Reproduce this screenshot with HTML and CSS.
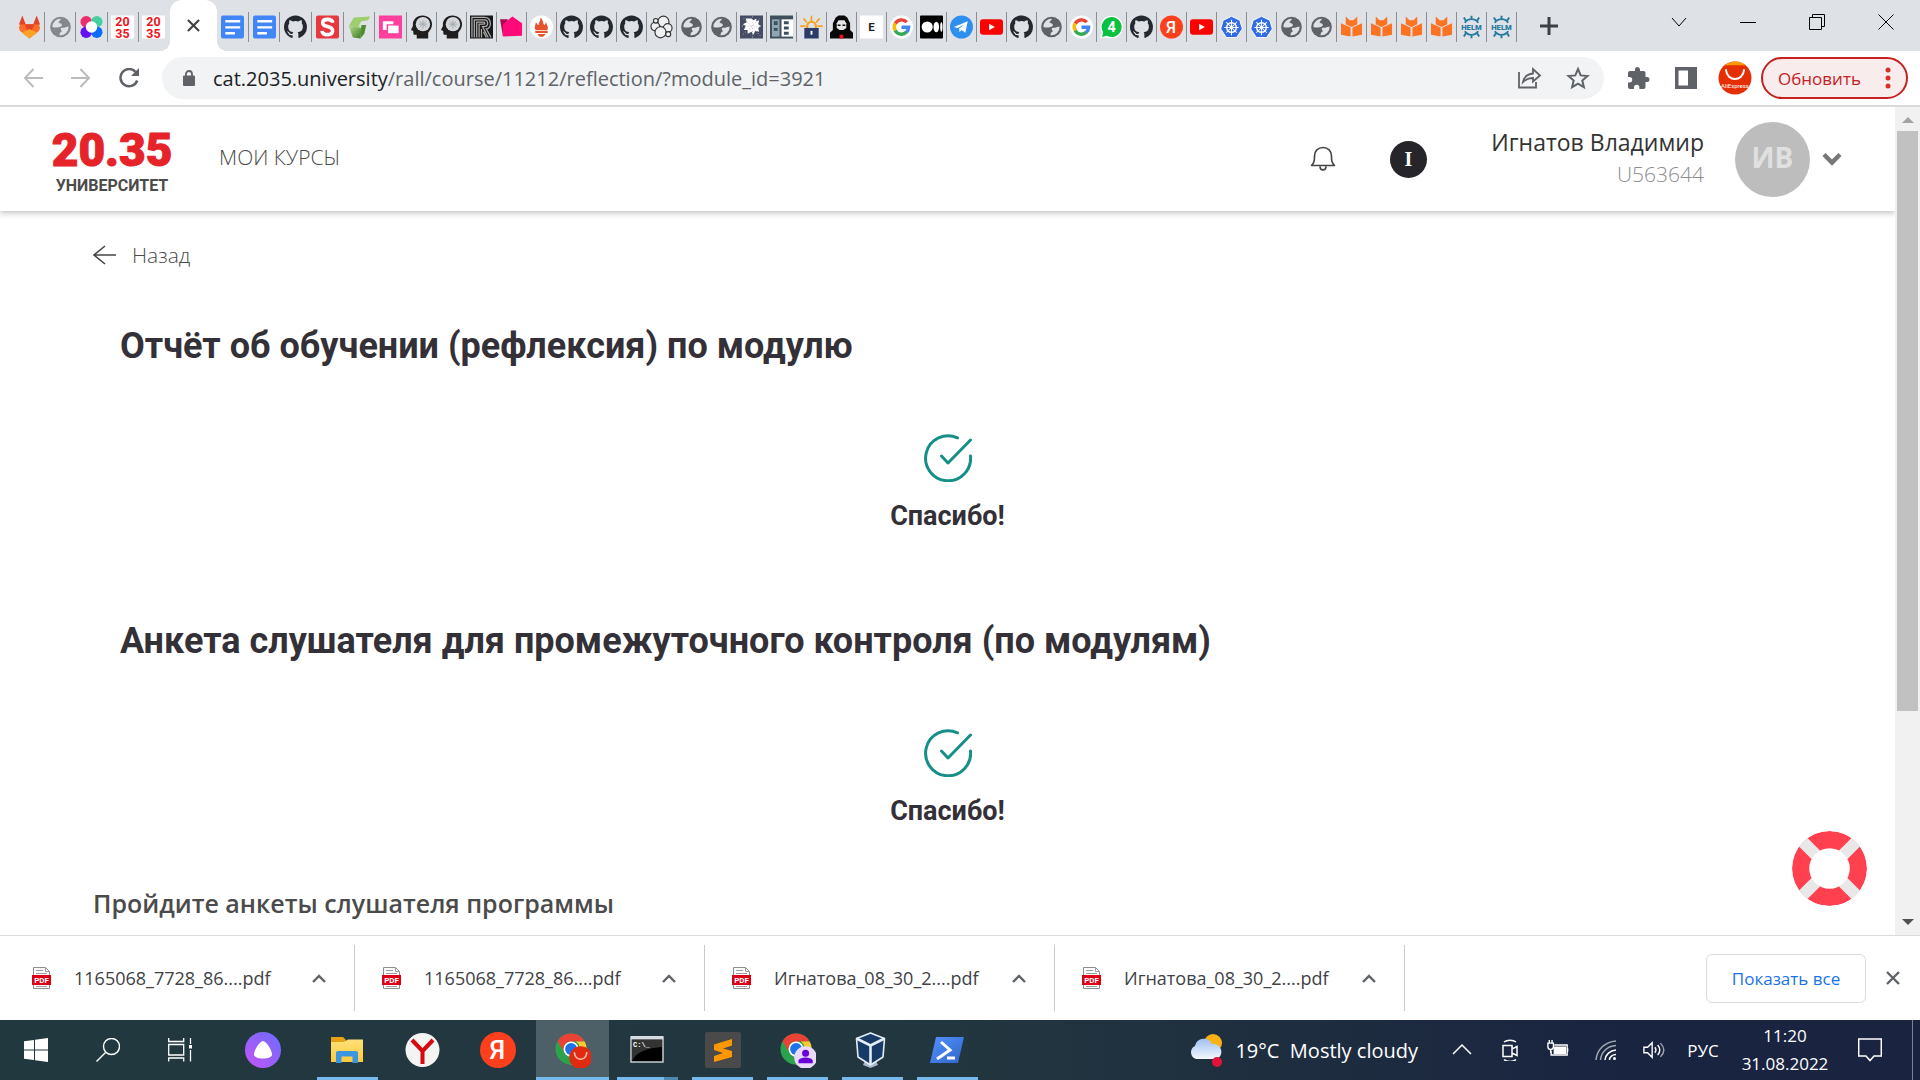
FILE: index.html
```html
<!DOCTYPE html>
<html lang="ru">
<head>
<meta charset="utf-8">
<meta name="viewport" content="width=device-width, initial-scale=1">
<title>Отчёт об обучении</title>
<link rel="stylesheet" href="styles.css">
</head>
<body>
<svg class="sprite" aria-hidden="true">
  <defs>
    <linearGradient id="g-alice" x1="0" y1="1" x2="1" y2="0"><stop offset="0" stop-color="#c455f5"/><stop offset="1" stop-color="#6a6cff"/></linearGradient>
    <linearGradient id="g-folder" x1="0" y1="0" x2="0" y2="1"><stop offset="0" stop-color="#ffe17a"/><stop offset="1" stop-color="#fdc93c"/></linearGradient>
    <linearGradient id="g-ps" x1="0" y1="0" x2="1" y2="1"><stop offset="0" stop-color="#5391fe"/><stop offset="1" stop-color="#2f66c8"/></linearGradient>
    <linearGradient id="g-cloud" x1="0" y1="0" x2="0" y2="1"><stop offset="0" stop-color="#9fc0f2"/><stop offset="1" stop-color="#f4f7fd"/></linearGradient>
    <linearGradient id="g-green" x1="0" y1="0" x2="1" y2="1"><stop offset="0" stop-color="#b5dc8c"/><stop offset="1" stop-color="#3c7a24"/></linearGradient>
    <clipPath id="c-ring"><circle cx="37.500" cy="37.500" r="37.500"/></clipPath>
  </defs>
  <symbol id="gitlab" viewBox="0 0 24 24"><path fill="#fc6d26" d="M1 13 4.500 1 8 9h8l3.500-8L23 13l-1 3-10 8L2 16z"/><path fill="#e24329" d="M4.500 0 1 9.500h7zM19.500 0 16 9.500h7zM7 9h10l-5 13z"/><path fill="#fca326" d="m4 18 8-4 8 4-8 6z"/></symbol>
  <symbol id="globe" viewBox="0 0 24 24"><circle cx="12" cy="12" r="10.800" fill="#5f6368"/><path fill="#dee1e6" d="M3.500 12A8.500 8.500 0 0 1 12.500 3.500c-.5 2-2.500 2-2.500 4 2.500.5 3.500 1 3.500 3-1.500 2-3 1.800-5 2-2 .2-3 0-5-.5zM20.500 11.500A8.500 8.500 0 0 1 11 20.500c0-2 .5-3 2-3.500 1-1.500-1.500-2-.5-4 2-.8 3 .2 4.500-.8z"/></symbol>
  <symbol id="dots" viewBox="0 0 24 24"><circle cx="6.500" cy="6.500" r="6" fill="#ee2d6f"/><circle cx="17.500" cy="6.500" r="6" fill="#45d0a0"/><circle cx="6.500" cy="17.500" r="6" fill="#6610f2"/><circle cx="17.500" cy="17.500" r="6" fill="#0a6cff"/><circle cx="12" cy="12" r="6" fill="#fff"/></symbol>
  <symbol id="docs" viewBox="0 0 24 24"><rect width="24" height="24" rx="2" fill="#4285f4"/><path stroke="#fff" stroke-width="2.400" d="M4.500 6h15.500M4.500 12.300h15.500M4.500 18.500h10"/></symbol>
  <symbol id="github" viewBox="0 0 16 16"><path fill="#24292f" d="M8 0C3.580 0 0 3.580 0 8c0 3.540 2.290 6.530 5.470 7.590.4.070.55-.17.55-.38 0-.19-.01-.82-.01-1.490-2.010.37-2.530-.49-2.690-.94-.09-.23-.48-.94-.82-1.130-.28-.15-.68-.52-.01-.53.63-.01 1.080.58 1.230.82.72 1.210 1.870.87 2.330.66.07-.52.28-.87.51-1.070-1.780-.2-3.640-.89-3.640-3.950 0-.87.31-1.590.82-2.150-.08-.2-.36-1.020.08-2.120 0 0 .67-.21 2.200.82a7.600 7.600 0 0 1 4 0c1.530-1.040 2.200-.82 2.200-.82.44 1.100.16 1.920.08 2.120.51.56.82 1.270.82 2.150 0 3.070-1.870 3.750-3.650 3.950.29.25.54.73.54 1.480 0 1.070-.01 1.930-.01 2.200 0 .21.15.46.55.38A8 8 0 0 0 16 8c0-4.420-3.580-8-8-8z"/></symbol>
  <symbol id="sred" viewBox="0 0 24 24"><rect width="24" height="24" rx="2" fill="#e5383f"/><path fill="none" stroke="#fff" stroke-width="3.800" d="M17.500 7.500C17 4.500 14.500 4 12 4c-3 0-5 1.300-5 3.800C7 13 17.300 10 17.300 16c0 2.600-2.300 4-5.300 4s-5.500-1.300-5.700-4"/></symbol>
  <symbol id="cube" viewBox="0 0 24 24"><path fill="url(#g-green)" d="M1 11 14 13 13 24 5 23z"/><path fill="#9fce6c" d="M1 11 6 2l17-1-2 4-7 1-3 5 3 2z"/><path fill="#4d8c30" d="M14 10h5l-2 9-4 5z"/></symbol>
  <symbol id="pinkwin" viewBox="0 0 24 24"><path fill="#ff3f9b" d="M0 0h24v24H0z"/><path fill="#fff" d="M4 6h11v3H8v6H4z"/><path fill="#fff" d="M9.500 10.500h11v8h-11z"/></symbol>
  <symbol id="head" viewBox="0 0 24 24"><path fill="#1f1d1d" d="M3 8C4 3 8 0 13 0c6 0 10 4 10 9 0 4-2 6-4 9v6H7v-4H4c-1-1 0-3-1-4l-2-1 2-4z"/><circle cx="13.500" cy="9" r="7.500" fill="#d5d9dc"/><path fill="none" stroke="#a4a9af" d="M9 9h9M13.500 5v9M10 6l7 6M10 12l7-6"/></symbol>
  <symbol id="rmaze" viewBox="0 0 24 24"><path fill="#18181a" d="M0 0h24v24H0z"/><path fill="none" stroke="#aaa" stroke-width="1.300" d="M2 23V2h13c8 0 8 12 2 12l5 9M4.500 23V4.500H15c4.500 0 4.500 7 0 7h-2l6 11.500M7 23V7h7c2 0 2 2 0 2H9.500v14M12 14v9M14 17l3 6"/></symbol>
  <symbol id="pinkfolder" viewBox="0 0 24 24"><path fill="#a80a52" d="M0 4h8v17H3z"/><path fill="#ff0a78" d="M3 22V9l10-8 10 7v13z"/></symbol>
  <symbol id="prom" viewBox="0 0 24 24"><circle cx="12" cy="12" r="12" fill="#fff"/><path fill="#e6522c" d="M6 15c-2-3 0-5 0-8 2 2 2 3 3 3 0-3 2-4 2-8 3 3 2 5 4 8 1-1 1-2 2-3 0 3 3 5 1 8zM5.500 16h13v2.300h-13zM8 19.300h8c-1 4-7 4-8 0z"/></symbol>
  <symbol id="elastic" viewBox="0 0 24 24"><g fill="#eef0f2" stroke="#333" stroke-width="1.200"><circle cx="14" cy="6.500" r="5.800"/><circle cx="5.500" cy="11.500" r="4.500"/><circle cx="18.500" cy="13" r="4.500"/><circle cx="11" cy="17.500" r="5.800"/><circle cx="19" cy="19.500" r="2.600"/><circle cx="6" cy="5.500" r="2.400"/></g></symbol>
  <symbol id="splash" viewBox="0 0 24 24"><path fill="#454c63" d="M0 0h24v24H0z"/><path fill="#fff" d="m12 3 2 2 3-2 0 3 3-1-1 4 3 2-3 2 1 4-4-1-2 4-2-3-4 2 0-4-4 0 2-4-3-2 4-2-1-4 4 0z"/><path stroke="#b9becb" stroke-dasharray="1 2" d="M13 1v22M2 11h21M4 3l17 18M3 20 21 3"/></symbol>
  <symbol id="panel" viewBox="0 0 24 24"><path fill="#3d505b" d="M0 0h24v24H0z"/><path fill="#90a5b1" d="M2 4h8v18H2z"/><path fill="#fff" d="M12 4h12v18H12z"/><path fill="#3d505b" d="M4 6h4v4H4zM4 13h4v3H4zM14.500 6h5v3h-5zM14.500 11.500h5v3h-5zM14.500 17h5v3h-5z"/></symbol>
  <symbol id="lencrypt" viewBox="0 0 24 24"><path stroke="#f9a11b" stroke-width="1.800" stroke-linecap="round" d="M12 1v4M4 3.500l2.500 3M20 3.500l-2.500 3M1 11h4M19 11h4"/><path fill="none" stroke="#f9a11b" stroke-width="2.200" d="M7.500 13v-2a4.500 4.500 0 0 1 9 0v2"/><path fill="#2c3c69" d="M4.500 13h15v11h-15z"/><path stroke="#fff" stroke-width="2" d="M12 16v4"/></symbol>
  <symbol id="hood" viewBox="0 0 24 24"><path fill="#080808" d="M6 2 9 0h6l3 2 3 6v7l3 3v6H0v-6l3-3V8z"/><path fill="#e6e6e6" d="M7 8 9 5h6l2 3v5l-3 2h-4l-3-2z"/><path fill="#111" d="M8 9.500h3V11H8zM13 9.500h3V11h-3z"/><path fill="#e11" d="M10 20h4v4h-4z"/></symbol>
  <symbol id="google" viewBox="0 0 24 24"><circle cx="12" cy="12" r="12" fill="#fff"/><g fill="none" stroke-width="3.600"><path stroke="#ea4335" d="M5.500 8.500A7.400 7.400 0 0 1 17.500 7"/><path stroke="#fbbc05" d="M5.500 8.300a7.400 7.400 0 0 0 0 7.600"/><path stroke="#34a853" d="M5.400 15.600a7.400 7.400 0 0 0 11.800 1.700"/><path stroke="#4285f4" d="M12 12.300h7.400c0 2.500-1 4-2.300 5.200"/></g></symbol>
  <symbol id="medium" viewBox="0 0 24 24"><rect width="24" height="24" rx="1"/><circle cx="7.500" cy="12" r="5.800" fill="#fff"/><ellipse cx="17" cy="12" rx="2.900" ry="5.500" fill="#fff"/><ellipse cx="22.300" cy="12" rx="1.200" ry="5" fill="#fff"/></symbol>
  <symbol id="telegram" viewBox="0 0 24 24"><circle cx="12" cy="12" r="12" fill="#2f8fee"/><path fill="#fff" d="M4 12 18.500 6 16 18l-4-3-2 2.500-.5-4 6-4.500-7.500 4z"/></symbol>
  <symbol id="youtube" viewBox="0 0 24 24"><rect y="4" width="24" height="16" rx="3" fill="#f00"/><path fill="#fff" d="m9.500 8.500 6 3.500-6 3.500z"/></symbol>
  <symbol id="wa" viewBox="0 0 24 24"><path fill="#fff" d="M12 0a12 12 0 1 1-5 23l-7 1 2-6A12 12 0 0 1 12 0z"/><path fill="#0bc142" d="M12 1.500a10.500 10.500 0 1 1-5 19.700l-5 1.300 1.300-5A10.500 10.500 0 0 1 12 1.500z"/></symbol>
  <symbol id="k8s" viewBox="0 0 24 24"><path fill="#326ce5" stroke="#fff" d="m12 .8 8.700 4.200L23.300 14l-6 9H6.700L.7 14 3.300 5z"/><circle cx="12" cy="12.500" r="5" fill="none" stroke="#fff" stroke-width="1.500"/><path stroke="#fff" stroke-width="1.100" d="M12 4.500v16M4.500 12.500h15M6.500 7l11 11M17.500 7l-11 11"/></symbol>
  <symbol id="bookcat" viewBox="0 0 24 24"><path fill="#fd7321" d="m6 1 4 4h4l4-4v8l-6 3-6-3zM1 8l10 4.500V22L1 20zM23 8l-10 4.500V22l10-2z"/></symbol>
  <symbol id="helm" viewBox="0 0 24 24"><g fill="none" stroke="#277a9f" stroke-width="2"><path d="M5 7.500a8.500 8.500 0 0 1 14 0M5 16.500a8.500 8.500 0 0 0 14 0M12 0v4M12 20v4M4 2l2.500 4M20 2l-2.500 4M4 22l2.500-4M20 22l-2.500-4"/></g></symbol>
  <symbol id="pdf" viewBox="0 0 19 22"><path fill="#fff" stroke="#8b8f92" d="M1.500.5h12l4 4v17h-16z"/><path fill="none" stroke="#9a9ea0" d="M13.500.5v4h4M4 3.500h7M4 6.500h11M4 19.500h11"/><path fill="#dc0016" d="M0 8h19v10H0z"/></symbol>
  <symbol id="up" viewBox="0 0 14 9"><path fill="none" stroke="#5f6368" stroke-width="2.400" d="m1 8 6-6 6 6"/></symbol>
  <symbol id="done" viewBox="0 0 48 48"><g fill="none" stroke="#158f87" stroke-width="3" stroke-linecap="round" stroke-linejoin="round"><path d="M33.500 3.800A22.500 22.500 0 1 0 46.500 22"/><path d="m17.500 22 6.500 7L46.500 6"/></g></symbol>
  <symbol id="chrome" viewBox="0 0 36 36"><circle cx="17" cy="18" r="16.500" fill="#2ba24c"/><path fill="#ea4335" d="M2.700 9.800A16.500 16.500 0 0 1 31.300 10H17a8 8 0 0 0-7.500 11z"/><path fill="#fcc934" d="M31.300 10A16.500 16.500 0 0 1 17 34.500L24 22a8 8 0 0 0-2-12z"/><circle cx="17" cy="18" r="8" fill="#fff"/><circle cx="17" cy="18" r="6.300" fill="#1a73e8"/></symbol>
</svg>

<header class="browser">
  <nav class="tabs" aria-label="Вкладки">
    <div class="tab-group tab-group-first">
      <button class="tab"><svg><use href="#gitlab"/></svg></button>
      <button class="tab"><svg class="faded"><use href="#globe"/></svg></button>
      <button class="tab"><svg><use href="#dots"/></svg></button>
      <button class="tab"><svg class="u2035" viewBox="0 0 24 24"><path fill="#fff" d="M0 0h24v24H0z"/><text x="12" y="11">20</text><text x="12" y="23">35</text></svg></button>
      <button class="tab tab-last"><svg class="u2035" viewBox="0 0 24 24"><path fill="#fff" d="M0 0h24v24H0z"/><text x="12" y="11">20</text><text x="12" y="23">35</text></svg></button>
    </div>
    <button class="tab-active" aria-label="Закрыть вкладку"><svg viewBox="0 0 14 14"><path stroke="#3c4043" stroke-width="2.200" d="m1 1 12 12M13 1 1 13"/></svg></button>
    <div class="tab-group tab-group-second">
      <button class="tab"><svg><use href="#docs"/></svg></button>
      <button class="tab"><svg><use href="#docs"/></svg></button>
      <button class="tab"><svg><use href="#github"/></svg></button>
      <button class="tab"><svg><use href="#sred"/></svg></button>
      <button class="tab"><svg><use href="#cube"/></svg></button>
      <button class="tab"><svg><use href="#pinkwin"/></svg></button>
    </div>
    <div class="tab-group tab-group-rest">
      <button class="tab"><svg><use href="#head"/></svg></button>
      <button class="tab"><svg><use href="#head"/></svg></button>
      <button class="tab"><svg><use href="#rmaze"/></svg></button>
      <button class="tab"><svg><use href="#pinkfolder"/></svg></button>
      <button class="tab"><svg><use href="#prom"/></svg></button>
      <button class="tab"><svg><use href="#github"/></svg></button>
      <button class="tab"><svg><use href="#github"/></svg></button>
      <button class="tab"><svg><use href="#github"/></svg></button>
      <button class="tab"><svg><use href="#elastic"/></svg></button>
      <button class="tab"><svg><use href="#globe"/></svg></button>
      <button class="tab"><svg><use href="#globe"/></svg></button>
      <button class="tab"><svg><use href="#splash"/></svg></button>
      <button class="tab"><svg><use href="#panel"/></svg></button>
      <button class="tab"><svg><use href="#lencrypt"/></svg></button>
      <button class="tab"><svg><use href="#hood"/></svg></button>
      <button class="tab"><svg class="letter-e" viewBox="0 0 24 24"><path fill="#fff" d="M0 0h24v24H0z"/><text x="12" y="16">E</text></svg></button>
      <button class="tab"><svg><use href="#google"/></svg></button>
      <button class="tab"><svg><use href="#medium"/></svg></button>
      <button class="tab"><svg><use href="#telegram"/></svg></button>
      <button class="tab"><svg><use href="#youtube"/></svg></button>
      <button class="tab"><svg><use href="#github"/></svg></button>
      <button class="tab"><svg><use href="#globe"/></svg></button>
      <button class="tab"><svg><use href="#google"/></svg></button>
      <button class="tab"><svg class="wa" viewBox="0 0 24 24"><use href="#wa"/><text x="12" y="17">4</text></svg></button>
      <button class="tab"><svg><use href="#github"/></svg></button>
      <button class="tab"><svg class="yandex" viewBox="0 0 24 24"><circle cx="12" cy="12" r="12" fill="#fc3f1d"/><text x="11.500" y="18">Я</text></svg></button>
      <button class="tab"><svg><use href="#youtube"/></svg></button>
      <button class="tab"><svg><use href="#k8s"/></svg></button>
      <button class="tab"><svg><use href="#k8s"/></svg></button>
      <button class="tab"><svg><use href="#globe"/></svg></button>
      <button class="tab"><svg><use href="#globe"/></svg></button>
      <button class="tab"><svg><use href="#bookcat"/></svg></button>
      <button class="tab"><svg><use href="#bookcat"/></svg></button>
      <button class="tab"><svg><use href="#bookcat"/></svg></button>
      <button class="tab"><svg><use href="#bookcat"/></svg></button>
      <button class="tab"><svg class="helm" viewBox="0 0 24 24"><use href="#helm"/><text x="12" y="15">HELM</text></svg></button>
      <button class="tab"><svg class="helm" viewBox="0 0 24 24"><use href="#helm"/><text x="12" y="15">HELM</text></svg></button>
    </div>
    <button class="new-tab" aria-label="Новая вкладка"><svg viewBox="0 0 18 18"><path stroke="#3c4043" stroke-width="3" d="M9 0v18M0 9h18"/></svg></button>
    <div class="window-controls">
      <button aria-label="Поиск вкладок"><svg viewBox="0 0 16 16"><path d="m1 4 7 8 7-8"/></svg></button>
      <button aria-label="Свернуть"><svg viewBox="0 0 16 16"><path d="M0 8.500h16"/></svg></button>
      <button aria-label="Развернуть"><svg viewBox="0 0 16 16"><path d="M.5 3.500h12v12H.5zM3.500 3.500v-3h12v12h-3"/></svg></button>
      <button aria-label="Закрыть"><svg viewBox="0 0 16 16"><path d="m.5.5 15 15M15.500.5l-15 15"/></svg></button>
    </div>
  </nav>
  <div class="toolbar">
    <button class="tool" aria-label="Назад"><svg viewBox="0 0 20 20"><path class="dim" d="M20 10H2M10.500 1 2 10l8.500 9"/></svg></button>
    <button class="tool" aria-label="Вперёд"><svg viewBox="0 0 20 20"><path class="dim" d="M0 10h18M9.500 1l8.500 9-8.500 9"/></svg></button>
    <button class="tool" aria-label="Обновить страницу"><svg viewBox="0 0 20 20"><path fill="none" stroke="#5f6368" stroke-width="2.500" d="M18.200 12.500a8.600 8.600 0 1 1-1.700-8.600"/><path fill="#5f6368" d="M20 0v8h-8z"/></svg></button>
    <div class="omnibox">
      <svg class="lock" viewBox="0 0 12 16"><path fill="#5f6368" d="M1 5.500h10a1 1 0 0 1 1 1V15a1 1 0 0 1-1 1H1a1 1 0 0 1-1-1V6.500a1 1 0 0 1 1-1z"/><path fill="none" stroke="#5f6368" stroke-width="1.800" d="M3 6V4a3 3 0 0 1 6 0v2"/></svg>
      <a class="url" href="#"><span>cat.2035.university</span>/rall/course/11212/reflection/?module_id=3921</a>
      <button aria-label="Поделиться"><svg viewBox="0 0 24 22"><g fill="none" stroke="#5f6368" stroke-width="1.800"><path d="M1 5v15.500h17V15"/><path d="M5 15c1-5 4-8 10-8.500V2l7 6.500-7 6V11c-4 0-7 1-10 4z"/></g></svg></button>
      <button aria-label="В закладки"><svg viewBox="0 0 24 24"><path fill="none" stroke="#5f6368" stroke-width="2" d="m12 3 2.700 6.400 6.800.6-5.200 4.500 1.600 6.700L12 17.600l-5.900 3.600 1.600-6.700L2.500 10l6.800-.6z"/></svg></button>
    </div>
    <div class="extensions">
      <button aria-label="Расширения"><svg viewBox="0 0 24 24"><path fill="#5f6368" d="M21 11h-1.500V7a2 2 0 0 0-2-2H14V3.500a2.500 2.500 0 0 0-5 0V5H4a2 2 0 0 0-2 2v4h1.500a2.700 2.700 0 0 1 0 5.400H2V21a2 2 0 0 0 2 2h4v-1.500a2.700 2.700 0 0 1 5.400 0V23h4.100a2 2 0 0 0 2-2v-5H21a2.500 2.500 0 0 0 0-5z"/></svg></button>
      <button aria-label="Боковая панель"><svg viewBox="0 0 24 24"><path fill="#5f6368" d="M1 1h22v22H1z"/><path fill="#fff" d="M4.500 4.500H14v15H4.500z"/></svg></button>
      <button class="profile" aria-label="Профиль"><svg viewBox="0 0 34 34"><circle cx="17" cy="17" r="16.500" fill="#e62e04"/><path fill="#f90" d="M6.500 4.200a16.500 16.500 0 0 1 21 0z"/><path fill="none" stroke="#fff" stroke-width="2" stroke-linecap="round" d="M8 9c1 12 17 12 18 0"/><text x="17" y="27">AliExpress</text></svg></button>
    </div>
    <button class="update">Обновить<svg viewBox="0 0 6 22"><g fill="#d93025"><circle cx="3" cy="3" r="2.500"/><circle cx="3" cy="11" r="2.500"/><circle cx="3" cy="19" r="2.500"/></g></svg></button>
  </div>
</header>

<div class="viewport">
  <div class="page">
    <header class="site-header">
      <a class="logo" href="#"><span class="logo-mark">20.35</span><span class="logo-name">УНИВЕРСИТЕТ</span></a>
      <a class="nav-link" href="#">МОИ КУРСЫ</a>
      <button class="bell" aria-label="Уведомления"><svg viewBox="0 0 26 26"><path fill="none" stroke="#444" stroke-width="1.600" stroke-linejoin="round" d="M1.500 19.500c3-3 3-5 3-9.500 0-5 3.500-8.500 8.500-8.500s8.500 3.500 8.500 8.500c0 4.500 0 6.500 3 9.500zM10 20.500c0 4.500 6 4.500 6 0"/></svg></button>
      <button class="info">I</button>
      <div class="user"><strong>Игнатов Владимир</strong><span>U563644</span></div>
      <button class="account"><span class="avatar">ИВ</span><svg viewBox="0 0 20 14"><path fill="none" stroke="#777" stroke-width="4.500" d="m2 2.500 8 8 8-8"/></svg></button>
    </header>
    <main class="content">
      <a class="back" href="#"><svg viewBox="0 0 23 20"><path fill="none" stroke="#444" stroke-width="1.600" d="M23 10H1M12 1 1 10l11 9"/></svg>Назад</a>
      <section class="report">
        <h1>Отчёт об обучении (рефлексия) по модулю</h1>
        <div class="thanks"><svg><use href="#done"/></svg><p>Спасибо!</p></div>
      </section>
      <section class="report">
        <h1>Анкета слушателя для промежуточного контроля (по модулям)</h1>
        <div class="thanks"><svg><use href="#done"/></svg><p>Спасибо!</p></div>
      </section>
      <h2>Пройдите анкеты слушателя программы</h2>
    </main>
    <button class="support" aria-label="Помощь"><svg viewBox="0 0 75 75"><g clip-path="url(#c-ring)"><circle cx="37.500" cy="37.500" r="37.500" fill="#ff404f"/><path stroke="#e8e8e8" stroke-width="12" d="m0 0 75 75M75 0 0 75"/></g><circle cx="37.500" cy="37.500" r="20.300" fill="#fff"/></svg></button>
  </div>
  <div class="scrollbar" aria-hidden="true">
    <svg viewBox="0 0 12 6"><path fill="#a3a3a3" d="M6 0l6 6H0z"/></svg>
    <div class="track"><div class="thumb"></div></div>
    <svg viewBox="0 0 12 6"><path fill="#505050" d="M0 0h12L6 6z"/></svg>
  </div>
</div>

<section class="downloads" aria-label="Загрузки">
  <div class="download"><svg class="pdf" viewBox="0 0 19 22"><use href="#pdf"/><text x="9.500" y="16">PDF</text></svg><a href="#">1165068_7728_86....pdf</a><button aria-label="Меню"><svg><use href="#up"/></svg></button></div>
  <div class="download"><svg class="pdf" viewBox="0 0 19 22"><use href="#pdf"/><text x="9.500" y="16">PDF</text></svg><a href="#">1165068_7728_86....pdf</a><button aria-label="Меню"><svg><use href="#up"/></svg></button></div>
  <div class="download"><svg class="pdf" viewBox="0 0 19 22"><use href="#pdf"/><text x="9.500" y="16">PDF</text></svg><a href="#">Игнатова_08_30_2....pdf</a><button aria-label="Меню"><svg><use href="#up"/></svg></button></div>
  <div class="download"><svg class="pdf" viewBox="0 0 19 22"><use href="#pdf"/><text x="9.500" y="16">PDF</text></svg><a href="#">Игнатова_08_30_2....pdf</a><button aria-label="Меню"><svg><use href="#up"/></svg></button></div>
  <button class="show-all">Показать все</button>
  <button class="close-bar" aria-label="Закрыть"><svg viewBox="0 0 14 14"><path stroke="#5f6368" stroke-width="2.400" d="m1 1 12 12M13 1 1 13"/></svg></button>
</section>

<footer class="taskbar">
  <button class="sys" aria-label="Пуск"><svg viewBox="0 0 24 24"><path fill="#fff" d="M0 3.300 10 2v9.400H0zM11 1.800 24 0v11.400H11zM0 12.500h10V22L0 20.700zM11 12.500h13V24l-13-1.800z"/></svg></button>
  <button class="sys" aria-label="Поиск"><svg viewBox="0 0 24 24"><circle cx="15.500" cy="8.500" r="8" fill="none" stroke="#fff" stroke-width="1.400"/><path stroke="#fff" stroke-width="1.400" d="M9.500 14.500.5 23.500"/></svg></button>
  <button class="sys" aria-label="Представление задач"><svg viewBox="0 0 24 24"><path fill="none" stroke="#fff" stroke-width="1.300" d="M.7 0v3.500h15V0M.7 6.500h15V17h-15zM.7 23.500V20h15v3.500M22.500 0v6M22.500 12v11.500"/><path fill="#fff" d="M21 7h3v3.500h-3z"/></svg></button>
  <button class="app app-alice" aria-label="Алиса"><svg viewBox="0 0 36 36"><circle cx="18" cy="18" r="18" fill="url(#g-alice)"/><path fill="#fff" d="M18 9c3 0 9 9 9 13.500 0 2.500-4 4-9 4s-9-1.500-9-4C9 18 15 9 18 9z"/></svg></button>
  <button class="app running" aria-label="Проводник"><svg viewBox="0 0 36 36"><path fill="#e6a117" d="M1 5h12l3 3v6H1z"/><path fill="url(#g-folder)" d="M1 10h13l4-2.500h15V30H1z"/><path fill="#3a97df" d="M6 31V20l2-1h18l2 1v11h-5.500v-6.500h-11V31z"/></svg></button>
  <button class="app" aria-label="Яндекс Браузер"><svg viewBox="0 0 36 36"><circle cx="17.500" cy="18" r="17" fill="#f4f4f4"/><path fill="none" stroke="#d6090e" stroke-width="4" d="m7 8 10.500 11M28 8 17.500 19v13"/></svg></button>
  <button class="app" aria-label="Яндекс"><svg class="yandex" viewBox="0 0 24 24"><circle cx="12" cy="12" r="12" fill="#fc3f1d"/><text x="11.500" y="18">Я</text></svg></button>
  <button class="app current" aria-label="Chrome"><svg viewBox="0 0 38 38"><use href="#chrome" width="36" height="36"/><circle cx="27" cy="27" r="12" fill="#e02b10"/><path fill="none" stroke="#ffb7a4" stroke-width="1.800" stroke-linecap="round" d="M20.500 22c1 9 12 9 13 0"/></svg></button>
  <button class="app running stacked" aria-label="Командная строка"><svg class="console" viewBox="0 0 36 36"><path fill="#000" stroke="#c8ccd0" stroke-width="1.500" d="M1 5h32v25H1z"/><path fill="#d4dbe2" d="M1 4h32v3.500H1z"/><path fill="#333" d="M2 8h30v7C18 16 7 19 2 29z"/><text x="3" y="15">C:\_</text></svg></button>
  <button class="app running" aria-label="Sublime Text"><svg viewBox="0 0 36 36"><rect width="36" height="36" rx="2" fill="#4a4a4a"/><path fill="#ff9800" d="M9 12.500 27 7v6.500l-9 3 9 2.500v6L9 30v-6l9-3-9-3z"/></svg></button>
  <button class="app running" aria-label="Chrome, второй профиль"><svg viewBox="0 0 38 38"><use href="#chrome" width="36" height="36"/><circle cx="27" cy="27" r="12" fill="#ead9fb"/><circle cx="27" cy="22.500" r="3.700" fill="#6a00d8"/><path fill="#6a00d8" d="M19.500 33v-3c2-4 13-4 15 0v3z"/></svg></button>
  <button class="app running" aria-label="VirtualBox"><svg viewBox="0 0 36 36"><path fill="#a9b8c8" d="M10 29h11l2 4-7.500 3L8 33z"/><path fill="#183a66" stroke="#e3edf6" stroke-width="1.600" stroke-linejoin="round" d="m15.500 1 14 5.500L28 25l-12.500 8L3 25 1.500 6.500z"/><path fill="none" stroke="#e3edf6" stroke-width="2.600" d="m1.500 6.500 14 7 14-7M15.500 13.500V33"/></svg></button>
  <button class="app running" aria-label="PowerShell"><svg viewBox="0 0 36 36"><path fill="url(#g-ps)" d="M6 5h28l-6 26H0z"/><path fill="none" stroke="#fff" stroke-width="3" d="m11 10 9 8-13 9M17 26h8"/></svg></button>
  <div class="tray">
    <button class="weather"><svg viewBox="0 0 34 34"><circle cx="24" cy="10" r="9" fill="#fbb016"/><path fill="url(#g-cloud)" d="M7 26a7 7 0 0 1-1-13 9 9 0 0 1 17-2 8 8 0 0 1 5 15z"/><circle cx="28" cy="29" r="5" fill="#e3123a"/></svg>19°C&nbsp; Mostly cloudy</button>
    <button class="tray-icon" aria-label="Скрытые значки"><svg viewBox="0 0 22 22"><path d="m2 15 9-9 9 9"/></svg></button>
    <button class="tray-icon" aria-label="Камера"><svg viewBox="0 0 22 22"><path d="M4 6.500h9v11H4zM13 10l5-2.500v9L13 14M5 3c3-2.500 9-2.500 12 0M5 20.500c3 2.500 9 2.500 12 0"/></svg></button>
    <button class="tray-icon" aria-label="Батарея"><svg viewBox="0 0 24 22"><path d="M8 5.500h14v11H4.500V12M22.500 9v4M1 3.500h6v4c0 4-6 4-6 0zM2.500 0v3M5.500 0v3M4 10v4"/><path class="solid" d="M8 8h12v6.500H8z"/></svg></button>
    <button class="tray-icon" aria-label="Сеть"><svg viewBox="0 0 22 22"><path class="faint" d="M1 21C2 10 10 3 21 2M5.500 21c.5-8 7-14 15.500-14.500"/><path d="M10 21c.5-5.500 5-9.500 11-10M14.500 21c0-3 3-5.500 6.500-5.500"/><circle class="solid" cx="19.500" cy="19.500" r="1.500"/></svg></button>
    <button class="tray-icon" aria-label="Громкость"><svg viewBox="0 0 24 22"><path d="M1 8h4l5-5v16l-5-5H1zM13 8c1.500 2 1.500 4 0 6M16 5.500c3 3.500 3 7.500 0 11"/><path class="faint" d="M19 3.500c5 5 5 10 0 15"/></svg></button>
    <button class="language">РУС</button>
    <button class="clock"><span>11:20</span><span>31.08.2022</span></button>
    <button class="notice" aria-label="Центр уведомлений"><svg viewBox="0 0 24 24"><path d="M.7 1h22.600v17H16l-4 4.500L8 18H.7z"/></svg></button>
    <button class="desktop" aria-label="Показать рабочий стол"></button>
  </div>
</footer>
</body>
</html>
```
FILE: styles.css
```css
* {
  box-sizing: border-box;
}

body {
  margin: 0;
  height: 100vh;
  display: flex;
  flex-direction: column;
  overflow: hidden;
  background: #fff;
  color: #343038;
  font-family: "Open Sans", "Noto Sans", sans-serif;
}

button {
  padding: 0;
  border: 0;
  background: none;
  color: inherit;
  font: inherit;
  display: flex;
  align-items: center;
  justify-content: center;
}

a {
  color: inherit;
  text-decoration: none;
}

svg {
  flex: none;
}

.sprite {
  position: absolute;
  width: 0;
  height: 0;
}

/* Lettering inside icons */
.u2035 text,
.letter-e text,
.wa text,
.yandex text,
.helm text,
.pdf text,
.profile text {
  font-family: Roboto, sans-serif;
  font-weight: 700;
  text-anchor: middle;
  fill: #fff;
}

.tab .u2035 text {
  font-size: 13px;
  fill: #ed1420;
}

.tab .letter-e text {
  font-size: 12px;
  fill: #222;
}

.wa text {
  font-size: 15px;
}

.yandex text {
  font-size: 17px;
  font-weight: 500;
}

.tab .helm text {
  font-size: 8px;
  font-weight: 900;
  fill: #277a9f;
}

.pdf text {
  font-size: 8px;
}

.profile text {
  font-size: 6px;
  font-weight: 400;
}

.console text {
  font: 700 7px "Liberation Mono", monospace;
  fill: #fff;
}

/* Tab strip */
.tabs {
  display: flex;
  height: 51px;
  padding-left: 14px;
  background: #dee1e6;
}

.tab-group {
  display: flex;
  align-items: center;
  padding-top: 2px;
}

.tab-group-first {
  width: 156px;
}

.tab-group-second {
  width: 190px;
}

.tab-group-rest {
  width: 1110px;
}

.tab {
  flex: 1;
  height: 30px;
  border-right: 1px solid #8a8d91;
}

.tab-last {
  border-color: transparent;
}

.tab svg {
  width: 23px;
  height: 24px;
}

.tab .faded {
  opacity: 0.7;
}

.tab-active {
  position: relative;
  width: 47px;
  border-radius: 12px 12px 0 0;
  background: #fff;
}

.tab-active::before,
.tab-active::after {
  content: "";
  position: absolute;
  bottom: 0;
  width: 10px;
  height: 10px;
}

.tab-active::before {
  right: 100%;
  background: radial-gradient(circle at 0 0, transparent 10px, #fff 10px);
}

.tab-active::after {
  left: 100%;
  background: radial-gradient(circle at 100% 0, transparent 10px, #fff 10px);
}

.tab-active svg {
  width: 13px;
  height: 13px;
}

.new-tab {
  width: 64px;
}

.new-tab svg {
  width: 18px;
  height: 18px;
}

.window-controls {
  display: flex;
  height: 44px;
  margin-left: auto;
}

.window-controls button {
  width: 69px;
}

.window-controls svg {
  width: 16px;
  height: 16px;
  fill: none;
  stroke: #000;
}

/* Address bar */
.toolbar {
  display: flex;
  align-items: center;
  height: 56px;
  padding: 0 12px 0 9px;
  border-bottom: 2px solid #dadada;
}

.tool {
  width: 48px;
  height: 42px;
}

.tool svg {
  width: 20px;
  height: 20px;
}

.dim {
  fill: none;
  stroke: #babcbe;
  stroke-width: 2;
}

.omnibox {
  flex: 1;
  display: flex;
  align-items: center;
  height: 42px;
  margin-left: 9px;
  padding: 0 14px 0 21px;
  border-radius: 21px;
  background: #f1f3f4;
}

.omnibox button {
  width: 24px;
  margin-left: 24px;
}

.omnibox button svg,
.extensions svg {
  width: 24px;
  height: 24px;
}

.lock {
  width: 12px;
  height: 16px;
}

.url {
  flex: 1;
  padding-left: 18px;
  color: #5f6368;
  font-size: 20px;
}

.url span {
  color: #202124;
}

.extensions {
  display: flex;
  align-items: center;
  gap: 24px;
  padding: 0 9px 0 22px;
}

.extensions .profile {
  margin-left: -4px;
}

.profile svg {
  width: 34px;
  height: 34px;
}

.update {
  width: 147px;
  height: 42px;
  gap: 24px;
  border: 2px solid #c5221f;
  border-radius: 21px;
  background: #f9eced;
  color: #c5221f;
  font-size: 17px;
}

.update svg {
  width: 6px;
  height: 22px;
}

/* Web page */
.viewport {
  flex: 1;
  min-height: 0;
  display: flex;
}

.page {
  position: relative;
  flex: 1;
  min-width: 0;
  overflow: hidden;
}

.site-header {
  display: flex;
  align-items: center;
  height: 104px;
  padding: 0 53px;
  box-shadow: 0 2px 6px rgba(0, 0, 0, 0.25);
}

.logo {
  width: 118px;
  display: flex;
  flex-direction: column;
  align-items: center;
  padding-top: 5px;
}

.logo-mark {
  color: #e52329;
  font: 900 46px/48px Roboto, sans-serif;
  -webkit-text-stroke: 1px #e52329;
}

.logo-name {
  color: #4b4b4b;
  font: 700 16px/24px Roboto, sans-serif;
}

.nav-link {
  margin-left: 48px;
  padding-bottom: 4px;
  color: #4b4b4b;
  font-size: 21px;
  font-weight: 300;
}

.bell {
  margin-left: auto;
}

.bell svg {
  width: 26px;
  height: 26px;
}

.info {
  width: 37px;
  height: 37px;
  margin-left: 54px;
  border-radius: 50%;
  background: #26252a;
  color: #fff;
  font: 700 20px "Liberation Serif", serif;
}

.user {
  display: flex;
  flex-direction: column;
  align-items: flex-end;
  width: 277px;
  padding-bottom: 2px;
  font-size: 23px;
  line-height: 32px;
}

.user strong {
  color: #333;
  font-weight: 500;
}

.user span {
  color: #8d8d8d;
  font-size: 21px;
  font-weight: 300;
}

.account {
  gap: 12px;
  margin-left: 31px;
}

.avatar {
  width: 75px;
  height: 75px;
  border-radius: 50%;
  background: #bdbdbd;
  color: #e0e0e0;
  font-size: 28px;
  font-weight: 700;
  line-height: 70px;
}

.account svg {
  width: 20px;
  height: 14px;
}

.content {
  padding: 28px 93px 0;
}

.back {
  display: flex;
  align-items: center;
  gap: 16px;
  height: 32px;
  color: #4b4b4b;
  font-size: 21px;
  font-weight: 300;
}

.back svg {
  width: 23px;
  height: 20px;
}

.report {
  height: 295px;
  padding: 51px 27px 0;
}

.report h1 {
  margin: 0;
  font: 700 36px/48px Roboto, sans-serif;
}

.thanks {
  display: flex;
  flex-direction: column;
  align-items: center;
  padding-top: 64px;
}

.thanks svg {
  width: 48px;
  height: 48px;
}

.thanks p {
  margin: 16px 0 0;
  font: 700 27px/36px Roboto, sans-serif;
}

.content h2 {
  margin: 24px 0 0;
  color: #4b4b4b;
  font-size: 25px;
  font-weight: 600;
  line-height: 36px;
}

.support {
  position: absolute;
  right: 28px;
  bottom: 29px;
}

.support svg {
  width: 75px;
  height: 75px;
}

.scrollbar {
  display: flex;
  flex-direction: column;
  align-items: center;
  gap: 8px;
  width: 25px;
  padding: 10px 0;
  background: #f1f1f1;
}

.scrollbar svg {
  width: 12px;
  height: 6px;
}

.track {
  flex: 1;
  width: 21px;
}

.thumb {
  height: 74.4%;
  background: #c1c1c1;
}

/* Downloads */
.downloads {
  display: flex;
  align-items: center;
  height: 85px;
  padding: 0 14px 0 5px;
  border-top: 1px solid #dadce0;
}

.download {
  display: flex;
  align-items: center;
  width: 350px;
  height: 66px;
  padding: 0 28px 0 27px;
  border-right: 1px solid #cacaca;
}

.pdf {
  width: 19px;
  height: 22px;
}

.download a {
  flex: 1;
  padding-left: 23px;
  color: #404246;
  font-size: 18px;
  white-space: nowrap;
}

.download button svg {
  width: 14px;
  height: 9px;
}

.show-all {
  width: 160px;
  height: 49px;
  margin-left: auto;
  border: 1px solid #dadce0;
  border-radius: 6px;
  color: #1a73e8;
  font-size: 17px;
  font-weight: 500;
}

.close-bar {
  width: 26px;
  margin-left: 14px;
}

.close-bar svg {
  width: 14px;
  height: 14px;
}

/* Taskbar */
.taskbar {
  display: flex;
  height: 60px;
  background: linear-gradient(90deg, #22383f 0%, #22363f 50%, #1e2d3f 68%, #192441 85%, #1a2440 100%);
  color: #fff;
}

.sys {
  width: 72px;
}

.sys svg {
  width: 24px;
  height: 24px;
}

.app {
  position: relative;
  width: 75px;
}

.app svg {
  width: 36px;
  height: 36px;
}

.app-alice {
  width: 94px;
}

.running::after,
.current::after {
  content: "";
  position: absolute;
  right: 7px;
  bottom: 0;
  left: 7px;
  height: 3px;
  background: #76b9ed;
}

.current {
  width: 73px;
  margin: 0 1px;
  background: #4d6067;
}

.current::after {
  right: 0;
  left: 0;
}

.stacked::after {
  background: linear-gradient(90deg, #76b9ed 47px, #5288b0 47px);
}

.tray {
  display: flex;
  margin-left: auto;
}

.weather {
  gap: 12px;
  margin-right: 20px;
  font-size: 20px;
  white-space: nowrap;
}

.weather svg {
  width: 34px;
  height: 34px;
}

.tray-icon,
.language {
  width: 48px;
  font-size: 17px;
}

.language {
  width: 50px;
}

.tray-icon svg {
  width: 22px;
  height: 22px;
}

.tray-icon path,
.notice path {
  fill: none;
  stroke: #fff;
  stroke-width: 1.5;
}

.tray-icon .solid {
  fill: #fff;
}

.tray-icon .faint {
  opacity: 0.6;
}

.clock {
  flex-direction: column;
  width: 114px;
  font-size: 17px;
  line-height: 28px;
}

.notice {
  width: 56px;
}

.notice svg {
  width: 24px;
  height: 24px;
}

.desktop {
  width: 8px;
  margin-left: 14px;
  border-left: 1px solid #7b8296;
}
```
